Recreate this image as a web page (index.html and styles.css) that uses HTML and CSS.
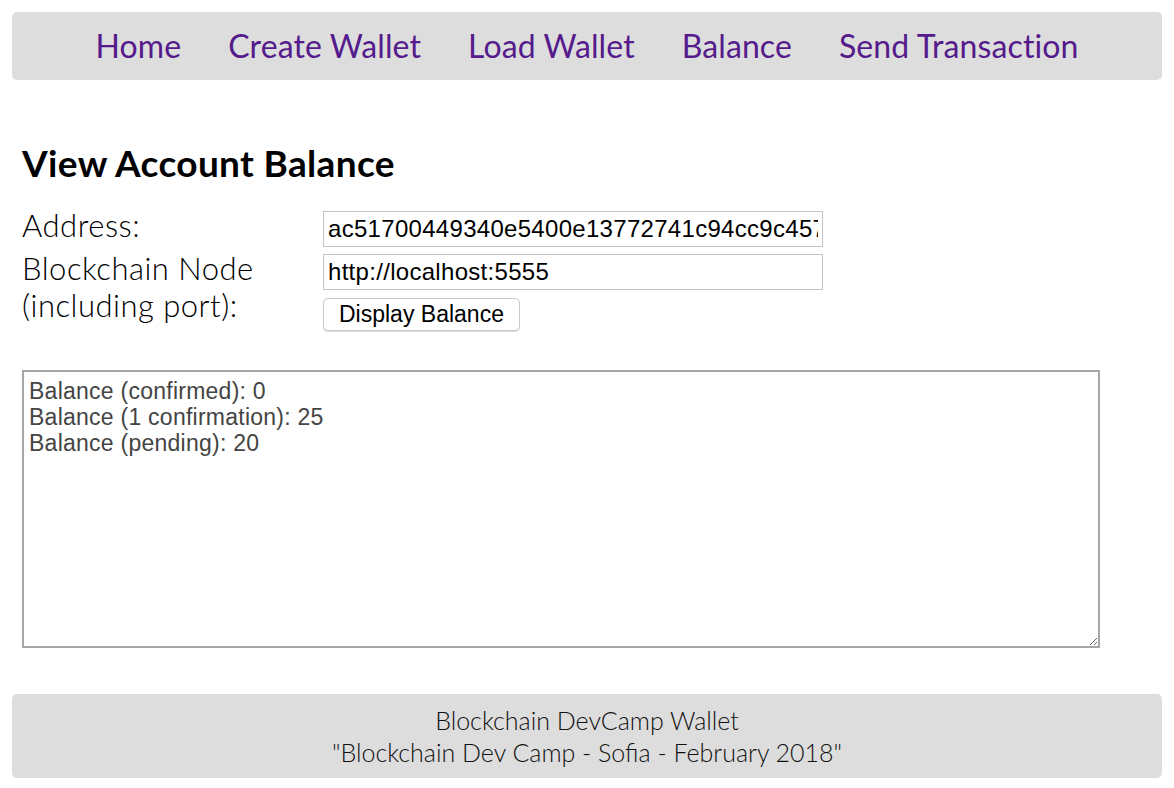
FILE: index.html
```html
<!DOCTYPE html>
<html>
<head>
<meta charset="utf-8">
<link rel="stylesheet" href="styles.css">
</head>
<body>
<header class="menu">
  <a href="#">Home</a>
  <a href="#">Create Wallet</a>
  <a href="#">Load Wallet</a>
  <a href="#">Balance</a>
  <a href="#">Send Transaction</a>
</header>
<main class="content">
  <h1 class="title">View Account Balance</h1>
  <div class="form">
    <label class="label label-first">Address:</label>
    <div class="field"><input class="input" type="text" value="ac51700449340e5400e13772741c94cc9c4577ad"></div>
    <label class="label label-second">Blockchain Node (including port):</label>
    <div class="field">
      <input class="input" type="text" value="http://localhost:5555">
      <button class="btn">Display Balance</button>
    </div>
  </div>
  <textarea class="output" readonly>Balance (confirmed): 0
Balance (1 confirmation): 25
Balance (pending): 20</textarea>
</main>
<footer class="footer">
  <div>Blockchain DevCamp Wallet</div>
  <div>"Blockchain Dev Camp - Sofia - February 2018"</div>
</footer>
</body>
</html>
```
FILE: styles.css
```css
html, body { background: #fff; }
body {
  margin: 12px;
  font-family: Lato, "Open Sans", sans-serif;
  color: #000;
}
.menu {
  background: #dddddd;
  border-radius: 5px;
  height: 68px;
  display: flex;
  justify-content: center;
  align-items: center;
  gap: 47px;
}
.menu a {
  color: #551a8b;
  text-decoration: none;
  font-size: 32px;
  line-height: 1;
  letter-spacing: 0.1px;
}
.content {
  padding: 0 10px;
}
.title {
  margin: 62px 0 27px;
  font-size: 37px;
  font-weight: 700;
  line-height: 42px;
  letter-spacing: 0.35px;
}
.form {
  display: grid;
  grid-template-columns: 301px 500px;
  row-gap: 7px;
  align-items: start;
}
.label {
  font-weight: 300;
  font-size: 31px;
  line-height: 37px;
  letter-spacing: 0.5px;
}
.label-first { line-height: 32px; margin-top: -2px; }
.label-second { margin-top: -4px; }
.field {
  display: flex;
  flex-direction: column;
  align-items: flex-start;
  gap: 8px;
}
.input {
  box-sizing: border-box;
  width: 500px;
  height: 36px;
  margin: 0;
  border: 1px solid #c4c4c4;
  padding: 0 4px;
  font-family: "Liberation Sans", Arial, sans-serif;
  font-size: 24px;
  letter-spacing: 0.3px;
  color: #000;
  background: #fff;
  outline: none;
}
.btn {
  box-sizing: border-box;
  height: 33px;
  padding: 0 15px;
  margin: 0;
  border: 1px solid #c8c8c8;
  border-radius: 5px;
  background: #fff;
  box-shadow: 0 1px 1px rgba(0,0,0,0.15);
  font-family: "Liberation Sans", Arial, sans-serif;
  font-size: 23px;
  color: #000;
}
.output {
  display: block;
  box-sizing: border-box;
  width: 1078px;
  height: 278px;
  margin: 39px 0 46px;
  border: 2px solid #a6a6a6;
  padding: 6px 5px 4px;
  font-family: "Liberation Sans", Arial, sans-serif;
  font-size: 23px;
  letter-spacing: 0.25px;
  line-height: 26px;
  color: #444;
  resize: both;
  outline: none;
}
.footer {
  background: #dddddd;
  border-radius: 5px;
  height: 84px;
  box-sizing: border-box;
  padding-top: 10px;
  text-align: center;
  font-weight: 300;
  font-size: 25px;
  line-height: 32px;
  color: #111;
}
```
